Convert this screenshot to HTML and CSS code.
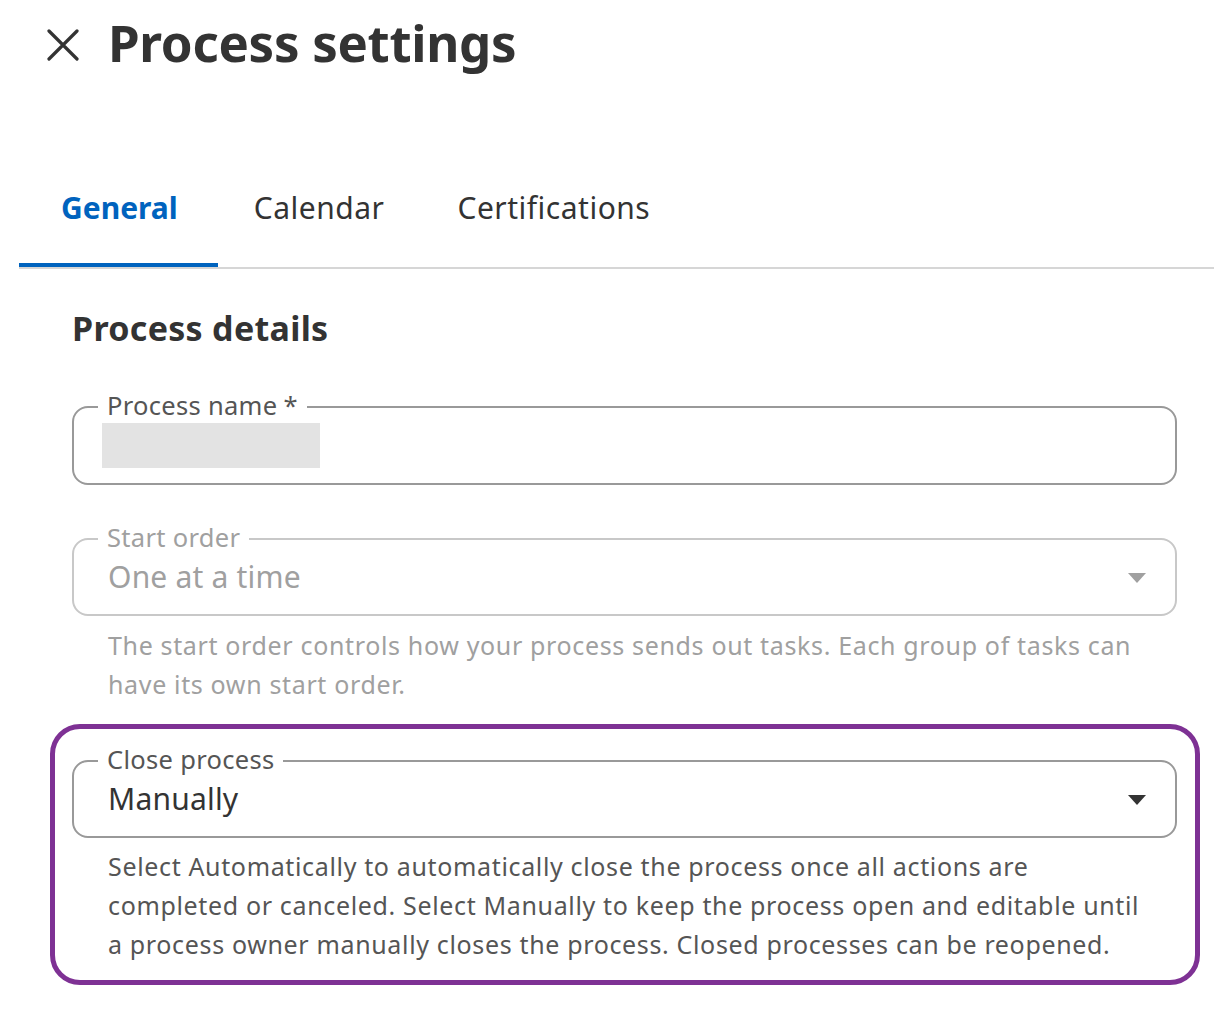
FILE: index.html
```html
<!DOCTYPE html>
<html lang="en">
<head>
<meta charset="utf-8">
<title>Process settings</title>
<link rel="stylesheet" href="styles.css">
</head>
<body>
<header class="header">
  <button class="close" aria-label="Close">
    <svg width="32" height="32" viewBox="0 0 32 32"><path d="M2 2 L30 30 M30 2 L2 30" stroke="#333" stroke-width="3.2" stroke-linecap="round" fill="none"/></svg>
  </button>
  <h1 class="title">Process settings</h1>
</header>
<nav class="tabs">
  <div class="tab active">General</div>
  <div class="tab">Calendar</div>
  <div class="tab">Certifications</div>
</nav>
<main class="content">
  <h2 class="section-title">Process details</h2>

  <fieldset class="field field-name">
    <legend class="legend">Process name<span class="req">*</span></legend>
    <div class="placeholder-block"></div>
  </fieldset>

  <fieldset class="field field-disabled field-select">
    <legend class="legend">Start order</legend>
    <div class="value">One at a time</div>
    <span class="caret"></span>
  </fieldset>
  <p class="helper helper-disabled">The start order controls how your process sends out tasks. Each group of tasks can<br>have its own start order.</p>

  <div class="highlight">
    <fieldset class="field field-select">
      <legend class="legend">Close process</legend>
      <div class="value">Manually</div>
      <span class="caret"></span>
    </fieldset>
    <p class="helper">Select Automatically to automatically close the process once all actions are<br>completed or canceled. Select Manually to keep the process open and editable until<br>a process owner manually closes the process. Closed processes can be reopened.</p>
  </div>
</main>
</body>
</html>
```

FILE: styles.css
```css
html, body {
  margin: 0;
  padding: 0;
  background: #ffffff;
}
body {
  font-family: "Noto Sans", "Liberation Sans", sans-serif;
  color: #333333;
  width: 1214px;
}
.header {
  display: flex;
  align-items: center;
  padding: 0 0 0 47px;
  height: 85px;
}
.close {
  border: 0;
  background: none;
  padding: 0;
  width: 32px;
  height: 32px;
  margin: 5px 29px 0 0;
  display: flex;
}
.title {
  margin: 0;
  font-size: 51px;
  font-weight: 700;
  color: #333333;
  letter-spacing: -0.3px;
  line-height: 1;
}
.tabs {
  display: flex;
  margin: 95px 0 0 19px;
  border-bottom: 2px solid #d6d6d6;
}
.tab {
  font-size: 30px;
  line-height: 40px;
  padding: 8px 37px 35px 36px;
  color: #333333;
  letter-spacing: 0.5px;
  border-bottom: 4px solid transparent;
}
.tab.active {
  color: #0063be;
  font-weight: 700;
  letter-spacing: 0;
  border-bottom-color: #0063be;
  padding-left: 42px;
  padding-right: 40px;
}
.content {
  padding: 39px 37px 0 72px;
}
.section-title {
  margin: 0 0 45px 0;
  font-size: 34px;
  font-weight: 700;
  line-height: 40px;
  letter-spacing: 0.3px;
  color: #333333;
}
.field {
  position: relative;
  margin: 0;
  border: 2px solid #999999;
  border-radius: 16px;
  padding: 0 24px 0 24px;
}
.legend {
  padding: 0 9px 4px 9px;
  font-size: 25.5px;
  line-height: 24px;
  letter-spacing: 0.3px;
  color: #555555;
}
.req {
  margin-left: 6px;
}
.placeholder-block {
  margin: 2px 0 15px 4px;
  width: 218px;
  height: 45px;
  background: #e3e3e3;
}
.field + .field {
  margin-top: 40px;
}
.field-select {
  padding-right: 70px;
}
.value {
  font-size: 30px;
  line-height: 40px;
  letter-spacing: 0.2px;
  margin: 4px 0 17px 10px;
  color: #333333;
}
.caret {
  position: absolute;
  right: 29px;
  top: 20px;
  width: 0;
  height: 0;
  border-left: 9.5px solid transparent;
  border-right: 9.5px solid transparent;
  border-top: 10px solid #333333;
}
.field-disabled {
  border-color: #c8c8c8;
}
.field-disabled .legend,
.field-disabled .value {
  color: #a0a0a0;
}
.field-disabled .caret {
  border-top-color: #a0a0a0;
}
.helper {
  margin: 10px 0 0 36px;
  font-size: 25px;
  line-height: 39px;
  letter-spacing: 0.65px;
  white-space: nowrap;
  color: #555555;
}
.helper-disabled {
  color: #a0a0a0;
}
.highlight {
  margin: 20px -23px 0 -22px;
  border: 5px solid #7e3194;
  border-radius: 30px;
  padding: 18px 18px 16px 17px;
}
.highlight .helper {
  margin-top: 9px;
}
```
